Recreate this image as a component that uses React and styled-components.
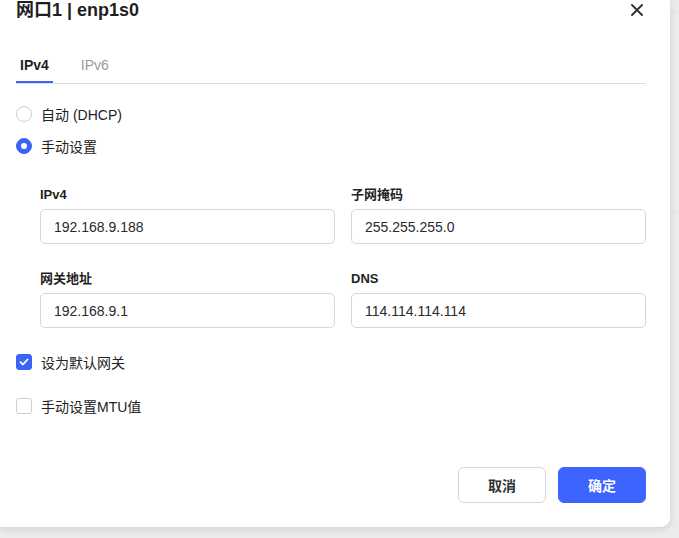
import React, { useState } from "react";
import styled, { createGlobalStyle } from "styled-components";

const Global = createGlobalStyle`
  html, body { margin: 0; padding: 0; background: #ececec; }
  body { font-family: "Liberation Sans", Arial, "Noto Sans CJK SC", sans-serif; color: #222; }
  * { box-sizing: border-box; }
`;

const Page = styled.div`
  display: flex;
  width: 679px;
  height: 538px;
  overflow: hidden;
  background: #ececec;
`;

const Dialog = styled.div`
  flex: 0 0 670px;
  height: 527px;
  background: #fff;
  border-radius: 0 0 9px 0;
  box-shadow: 0 2px 8px rgba(0, 0, 0, 0.12);
  padding: 0 24px 24px 16px;
  display: flex;
  flex-direction: column;
`;

const Backdrop = styled.div`
  flex: 1;
  display: flex;
  flex-direction: column;
  padding-top: 12px;
`;

const BackdropLine = styled.div`
  height: ${(p) => p.$h}px;
  border-top: 1px solid #e2e2e2;
`;

const Header = styled.div`
  display: flex;
  align-items: center;
  justify-content: space-between;
  height: 20px;
`;

const Title = styled.div`
  font-size: 18px;
  font-weight: 700;
  line-height: 20px;
  color: #1f1f1f;
`;

const CloseBtn = styled.button`
  border: none;
  background: none;
  padding: 0;
  width: 14px;
  height: 14px;
  margin-right: 2px;
  display: flex;
  align-items: center;
  justify-content: center;
  cursor: pointer;
`;

const TabBar = styled.div`
  display: flex;
  gap: 24px;
  margin-top: 35px;
  border-bottom: 1px solid #dcdcdc;
`;

const Tab = styled.div`
  padding: 0 4px 6px;
  font-size: 14px;
  line-height: 20px;
  font-weight: ${(p) => (p.$active ? 700 : 400)};
  color: ${(p) => (p.$active ? "#1f1f1f" : "#999999")};
  border-bottom: 2px solid ${(p) => (p.$active ? "#3b63f6" : "transparent")};
`;

const RadioGroup = styled.div`
  display: flex;
  flex-direction: column;
  gap: 12px;
  margin-top: 20px;
`;

const OptionRow = styled.label`
  display: flex;
  align-items: center;
  gap: 9px;
  height: 20px;
  font-size: 14px;
  color: #222;
  cursor: pointer;
`;

const RadioDot = styled.span`
  width: 16px;
  height: 16px;
  border-radius: 50%;
  flex: none;
  display: flex;
  align-items: center;
  justify-content: center;
  border: 1px solid ${(p) => (p.$on ? "#3b63f6" : "#cfcfcf")};
  background: ${(p) => (p.$on ? "#3b63f6" : "#fff")};
  &::after {
    content: "";
    width: 6px;
    height: 6px;
    border-radius: 50%;
    background: #fff;
    display: ${(p) => (p.$on ? "block" : "none")};
  }
`;

const Form = styled.div`
  display: grid;
  grid-template-columns: 1fr 1fr;
  column-gap: 16px;
  row-gap: 25px;
  margin: 29px 0 0 24px;
`;

const Field = styled.div`
  display: flex;
  flex-direction: column;
  gap: 4px;
`;

const Label = styled.div`
  font-size: 13px;
  font-weight: 700;
  line-height: 20px;
  color: #1f1f1f;
`;

const Input = styled.input`
  height: 35px;
  border: 1px solid #d6d6d6;
  border-radius: 5px;
  padding: 0 13px;
  font-family: inherit;
  font-size: 14px;
  color: #2a2a2a;
  outline: none;
  background: #fff;
`;

const Checks = styled.div`
  display: flex;
  flex-direction: column;
  gap: 24px;
  margin-top: 24px;
`;

const CheckBox = styled.span`
  width: 16px;
  height: 16px;
  border-radius: 3px;
  flex: none;
  display: flex;
  align-items: center;
  justify-content: center;
  border: 1px solid ${(p) => (p.$on ? "#3b63f6" : "#cfcfcf")};
  background: ${(p) => (p.$on ? "#3b63f6" : "#fff")};
`;

const Footer = styled.div`
  display: flex;
  justify-content: flex-end;
  gap: 12px;
  margin-top: auto;
`;

const Button = styled.button`
  width: 88px;
  height: 36px;
  border-radius: 6px;
  font-family: inherit;
  font-size: 14px;
  font-weight: 700;
  cursor: pointer;
  border: 1px solid ${(p) => (p.$primary ? "#3d64ff" : "#d6d6d6")};
  background: ${(p) => (p.$primary ? "#3d64ff" : "#fff")};
  color: ${(p) => (p.$primary ? "#fff" : "#333")};
`;

export default function App() {
  const [mode, setMode] = useState("manual");
  const [gw, setGw] = useState(true);
  const [mtu, setMtu] = useState(false);
  return (
    <>
      <Global />
      <Page>
        <Dialog>
          <Header>
            <Title>网口1 | enp1s0</Title>
            <CloseBtn aria-label="close">
              <svg width="12" height="12" viewBox="0 0 12 12">
                <path d="M1 1L11 11M11 1L1 11" stroke="#333" strokeWidth="1.9" strokeLinecap="round" />
              </svg>
            </CloseBtn>
          </Header>
          <TabBar>
            <Tab $active>IPv4</Tab>
            <Tab>IPv6</Tab>
          </TabBar>
          <RadioGroup>
            <OptionRow onClick={() => setMode("dhcp")}>
              <RadioDot $on={mode === "dhcp"} />
              自动 (DHCP)
            </OptionRow>
            <OptionRow onClick={() => setMode("manual")}>
              <RadioDot $on={mode === "manual"} />
              手动设置
            </OptionRow>
          </RadioGroup>
          <Form>
            <Field>
              <Label>IPv4</Label>
              <Input defaultValue="192.168.9.188" />
            </Field>
            <Field>
              <Label>子网掩码</Label>
              <Input defaultValue="255.255.255.0" />
            </Field>
            <Field>
              <Label>网关地址</Label>
              <Input defaultValue="192.168.9.1" />
            </Field>
            <Field>
              <Label>DNS</Label>
              <Input defaultValue="114.114.114.114" />
            </Field>
          </Form>
          <Checks>
            <OptionRow onClick={() => setGw(!gw)}>
              <CheckBox $on={gw}>
                {gw && (
                  <svg width="10" height="10" viewBox="0 0 10 10">
                    <path d="M1.5 5.2L4 7.5L8.5 2.5" fill="none" stroke="#fff" strokeWidth="1.8" strokeLinecap="round" strokeLinejoin="round" />
                  </svg>
                )}
              </CheckBox>
              设为默认网关
            </OptionRow>
            <OptionRow onClick={() => setMtu(!mtu)}>
              <CheckBox $on={mtu} />
              手动设置MTU值
            </OptionRow>
          </Checks>
          <Footer>
            <Button>取消</Button>
            <Button $primary>确定</Button>
          </Footer>
        </Dialog>
        <Backdrop>
          <BackdropLine $h={200} />
          <BackdropLine $h={100} />
        </Backdrop>
      </Page>
    </>
  );
}
